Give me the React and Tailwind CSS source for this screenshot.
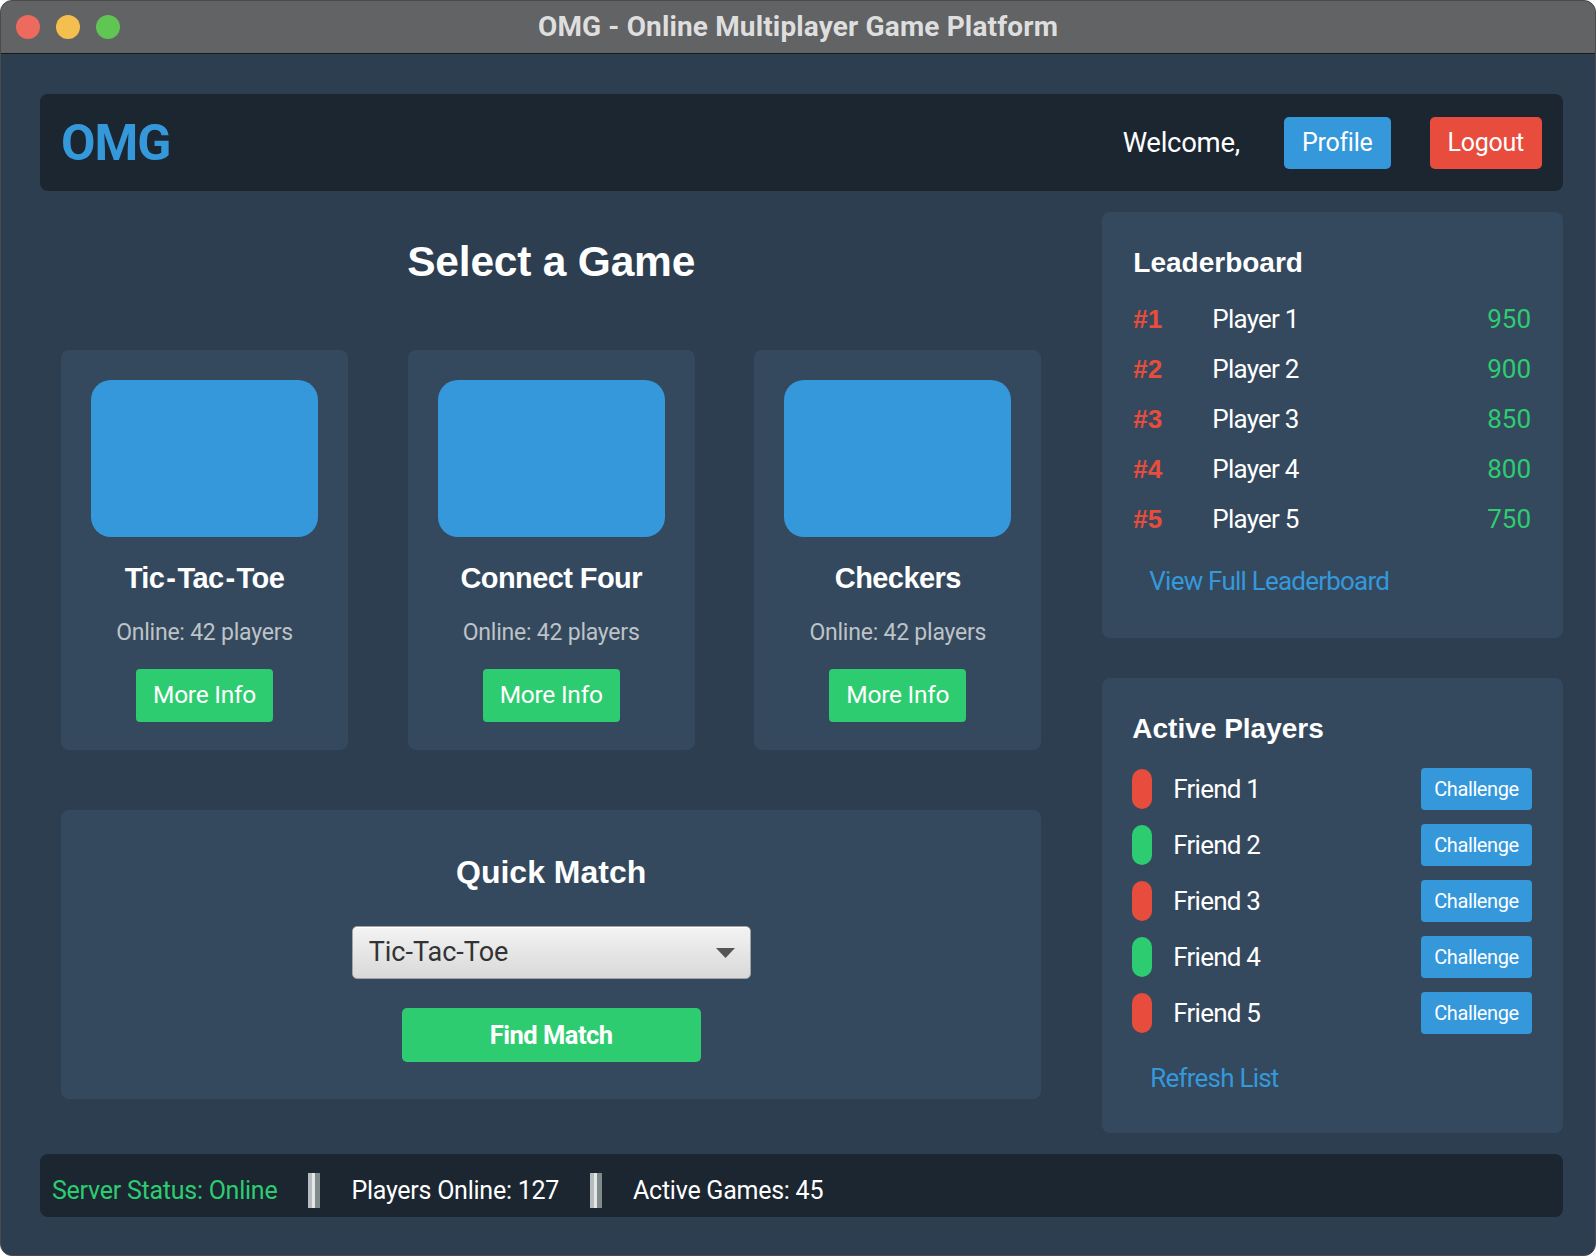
import React from "react";

const HEAD = "font-['Liberation_Sans',Arial,sans-serif]";

function GameCard({ title }) {
  const parts = title.split("-");
  return (
    <div className="w-[287px] bg-[#34495e] rounded-[8px] flex flex-col items-center pt-[30px] pb-[28px] px-[30px]">
      <div className="w-full h-[157px] rounded-[20px] bg-[#3498db]" />
      <div className={`${HEAD} mt-[23px] text-[29px] leading-[36px] font-bold text-white tracking-[-0.02em]`}>
        {parts.map((p, i) => (
          <React.Fragment key={i}>
            {i > 0 && <span className="px-[2px]">-</span>}
            {p}
          </React.Fragment>
        ))}
      </div>
      <div className="mt-[24px] text-[23px] leading-[26px] text-[#bdc3c7] tracking-[-0.01em]">Online: 42 players</div>
      <button className="mt-[23px] h-[53px] px-[17px] rounded-[4px] bg-[#2ecc71] text-white text-[24.5px] tracking-[-0.01em]">More Info</button>
    </div>
  );
}

function Sep() {
  return (
    <div className="mx-[31px] flex h-[35px] w-[12px]">
      <div className="w-[4px] bg-[#b7bcbf]" />
      <div className="w-[3px] bg-[#e4e6e8]" />
      <div className="w-[5px] bg-[#808b8c]" />
    </div>
  );
}

export default function App() {
  const leaders = [
    ["#1", "Player 1", "950"],
    ["#2", "Player 2", "900"],
    ["#3", "Player 3", "850"],
    ["#4", "Player 4", "800"],
    ["#5", "Player 5", "750"],
  ];
  const friends = [
    ["Friend 1", false],
    ["Friend 2", true],
    ["Friend 3", false],
    ["Friend 4", true],
    ["Friend 5", false],
  ];
  return (
    <div className="w-[1596px] h-[1256px] bg-white font-['Roboto',sans-serif]">
      <div className="w-full h-full rounded-[12px] overflow-hidden border border-[#4a4b4d] flex flex-col bg-[#2c3e50]">
        {/* title bar */}
        <div className="h-[53px] shrink-0 bg-[#626365] border-b border-[#1a1a1a] grid grid-cols-[1fr_auto_1fr] items-center">
          <div className="flex items-center gap-[16px] pl-[15px]">
            <div className="w-[24px] h-[24px] rounded-full bg-[#ee6a5f]" />
            <div className="w-[24px] h-[24px] rounded-full bg-[#f5bf4f]" />
            <div className="w-[24px] h-[24px] rounded-full bg-[#61c554]" />
          </div>
          <div className="text-[28px] font-bold text-[#dedede] tracking-[0.005em]">OMG - Online Multiplayer Game Platform</div>
          <div />
        </div>

        {/* content */}
        <div className="flex-1 flex flex-col pt-[40px] pl-[39px] pr-[32px]">
          {/* header */}
          <div className="h-[97px] rounded-[8px] bg-[#1b2631] flex items-center px-[21px]">
            <div className="text-[50px] font-bold text-[#3498db] tracking-[-0.02em] leading-none">OMG</div>
            <div className="ml-auto flex items-center">
              <span className="text-[27.5px] text-white tracking-[-0.01em]">Welcome,</span>
              <button className="ml-[44px] h-[52px] px-[18px] rounded-[5px] bg-[#3498db] text-white text-[25px] tracking-[-0.01em]">Profile</button>
              <button className="ml-[39px] h-[52px] px-[18px] rounded-[5px] bg-[#e74c3c] text-white text-[25px] tracking-[-0.01em]">Logout</button>
            </div>
          </div>

          {/* main row */}
          <div className="mt-[21px] flex items-start">
            {/* left column */}
            <div className="w-[1063px] pl-[21px] pr-[61px] pt-[26px] flex flex-col">
              <div className={`${HEAD} text-center text-[42.5px] leading-[48px] font-bold text-white tracking-[-0.005em]`}>Select a Game</div>
              <div className="mt-[64px] flex justify-between">
                <GameCard title="Tic-Tac-Toe" />
                <GameCard title="Connect Four" />
                <GameCard title="Checkers" />
              </div>
              <div className="mt-[60px] h-[289px] rounded-[8px] bg-[#34495e] flex flex-col items-center pt-[43px]">
                <div className={`${HEAD} text-[32px] leading-[38px] font-bold text-white`}>Quick Match</div>
                <div className="mt-[35px] w-[399px] h-[53px] rounded-[5px] border border-[#a3a3a3] bg-[linear-gradient(#f3f3f3,#d9d9d9)] shadow-[inset_0_1px_0_#ffffff] flex items-center pl-[16px] pr-[15px]">
                  <span className="text-[27px] text-[#333333]">Tic-Tac-Toe</span>
                  <svg className="ml-auto" width="19" height="10" viewBox="0 0 19 10"><path d="M0 0 H19 L9.5 10 Z" fill="#555555" /></svg>
                </div>
                <button className="mt-[29px] w-[299px] h-[54px] rounded-[5px] bg-[#2ecc71] text-white text-[25.5px] font-bold tracking-[-0.02em]">Find Match</button>
              </div>
            </div>

            {/* right column */}
            <div className="w-[461px] flex flex-col gap-[40px]">
              <div className="h-[426px] rounded-[8px] bg-[#34495e] pt-[34px] pl-[31px] pr-[32px]">
                <div className={`${HEAD} text-[28px] leading-[34px] font-bold text-white`}>Leaderboard</div>
                <div className="mt-[14px] flex flex-col">
                  {leaders.map(([r, n, s]) => (
                    <div key={r} className="h-[50px] flex items-center text-[26px]">
                      <span className={`${HEAD} w-[79px] font-bold text-[#e74c3c]`}>{r}</span>
                      <span className="text-white tracking-[-0.03em]">{n}</span>
                      <span className="ml-auto text-[#2ecc71]">{s}</span>
                    </div>
                  ))}
                </div>
                <div className="mt-[22px] pl-[16px] text-[26px] leading-[30px] text-[#3498db] tracking-[-0.03em]">View Full Leaderboard</div>
              </div>

              <div className="h-[455px] rounded-[8px] bg-[#34495e] pt-[34px] pl-[30px] pr-[31px]">
                <div className={`${HEAD} text-[28px] leading-[34px] font-bold text-white`}>Active Players</div>
                <div className="mt-[22px] flex flex-col gap-[14px]">
                  {friends.map(([n, on]) => (
                    <div key={n} className="h-[42px] flex items-center">
                      <div className={`w-[20px] h-[40px] rounded-full ${on ? "bg-[#2ecc71]" : "bg-[#e74c3c]"}`} />
                      <span className="ml-[21px] text-[26px] text-white tracking-[-0.03em]">{n}</span>
                      <button className="ml-auto w-[111px] h-[42px] rounded-[4px] bg-[#3498db] text-white text-[20px] tracking-[-0.02em]">Challenge</button>
                    </div>
                  ))}
                </div>
                <div className="mt-[29px] pl-[18px] text-[26px] leading-[30px] text-[#3498db] tracking-[-0.03em]">Refresh List</div>
              </div>
            </div>
          </div>

          {/* status bar */}
          <div className="mt-[21px] h-[63px] rounded-[8px] bg-[#1b2631] flex items-center pl-[12px] pt-[10px]">
            <span className="text-[25px] text-[#2ecc71] tracking-[-0.01em]">Server Status: Online</span>
            <Sep />
            <span className="text-[25px] text-white tracking-[-0.01em]">Players Online: 127</span>
            <Sep />
            <span className="text-[25px] text-white tracking-[-0.01em]">Active Games: 45</span>
          </div>
        </div>
      </div>
    </div>
  );
}
